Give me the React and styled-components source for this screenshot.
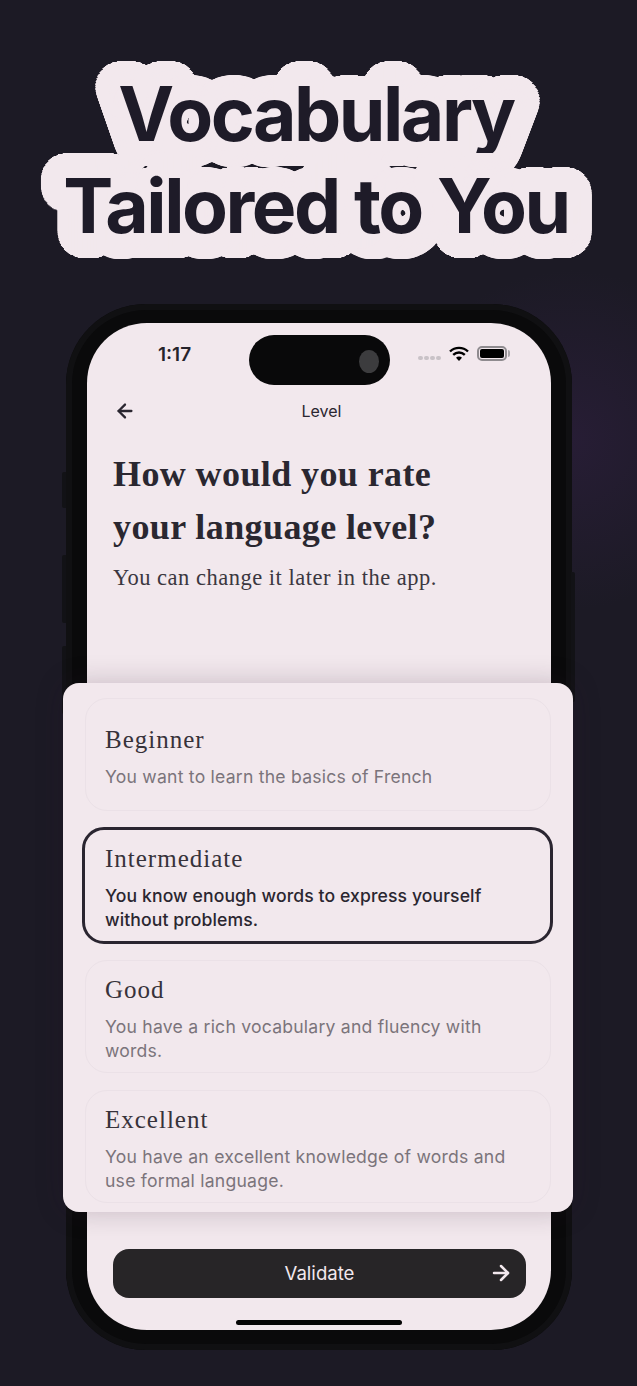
import React from "react";
import styled, { createGlobalStyle } from "styled-components";
import { ArrowLeft, ArrowRight } from "lucide-react";

// ring of hard shadows, gives the blobby sticker outline round the headline
const ring = (radius, steps, colour) => {
  const out = [];
  for (let i = 0; i < steps; i++) {
    const a = (i / steps) * Math.PI * 2;
    out.push(`${(Math.cos(a) * radius).toFixed(1)}px ${(Math.sin(a) * radius).toFixed(1)}px 0.6px ${colour}`);
  }
  return out.join(",");
};

const levels = [
  { name: "Beginner", text: "You want to learn the basics of French" },
  { name: "Intermediate", text: "You know enough words to express yourself without problems.", selected: true },
  { name: "Good", text: "You have a rich vocabulary and fluency with words." },
  { name: "Excellent", text: "You have an excellent knowledge of words and use formal language." },
];

const GlobalStyle = createGlobalStyle`
  html, body { margin: 0; padding: 0; background: #1c1a25; }
  * { box-sizing: border-box; }
`;

const Page = styled.div`
  width: 637px; height: 1386px; overflow: hidden; padding-top: 68px;
  background: radial-gradient(circle at 570px 440px, #271d35 0, #1c1a25 170px);
  font-family: Inter, "Liberation Sans", sans-serif;
`;
const Headline = styled.h1`
  margin: 0; height: 236px; padding-right: 5px; text-align: center; color: #1e1b28;
  font-size: 75px; line-height: 92px; font-weight: 700; letter-spacing: -2.5px;
  text-shadow: ${ring(25, 96, "#f2e8ed")};
`;
const Line = styled.div``;
const Phone = styled.div`
  position: relative; width: 506px; height: 1046px; margin-left: 66px;
  padding: 19px 21px 20px; border-radius: 80px; background: #0a0a0b;
  box-shadow: inset 0 0 0 6px #101012;
`;
const SideButton = styled.div`
  position: absolute; top: ${(p) => p.$top}px; width: 4px; height: ${(p) => p.$height}px;
  ${(p) => (p.$right ? "right: -3px; border-radius: 0 2px 2px 0;" : "left: -4px; border-radius: 2px 0 0 2px;")}
  background: #121216;
`;
const Screen = styled.div`
  position: relative; display: flex; flex-direction: column; height: 100%;
  border-radius: 60px; background: #f2e8ed; overflow: hidden; color: #2a2630;
`;
const Island = styled.div`
  position: absolute; left: 162px; top: 12px; width: 141px; height: 50px;
  border-radius: 25px; background: #09090a;
`;
const Lens = styled.div`
  position: absolute; right: 11px; top: 15px; width: 20px; height: 23px;
  border-radius: 50%; background: #3c3c3e;
`;
const StatusBar = styled.div`
  display: flex; align-items: center; justify-content: space-between;
  height: 63px; padding: 0 44px 0 71px;
`;
const Time = styled.span`font-size: 19px; font-weight: 600; color: #26232b; margin-top: -1px;`;
const StatusIcons = styled.div`display: flex; align-items: center; gap: 8px; margin-top: -2px;`;
const Dots = styled.div`display: flex; gap: 1px; margin-top: 9px;`;
const Dot = styled.i`display: block; width: 5px; height: 4px; border-radius: 2px; background: #c9c2c7;`;
const Battery = styled.div`
  position: relative; width: 30px; height: 15px; padding: 1px;
  border: 2px solid #8f8b8f; border-radius: 5px;
  &:after { content: ""; position: absolute; right: -5px; top: 2px; width: 2px; height: 7px; border-radius: 0 2px 2px 0; background: #a9a5a9; }
`;
const BatteryFill = styled.div`height: 100%; border-radius: 2px; background: #000;`;
const NavBar = styled.div`
  display: flex; align-items: center; position: relative; height: 50px; padding: 0 26px 0 27px;
  margin-bottom: 12px; color: #2a2630;
`;
const NavTitle = styled.div`flex: 1; text-align: center; font-size: 16px; margin-left: 6px; margin-right: 24px;`;
const Intro = styled.div`padding: 0 26px;`;
const Title = styled.h2`
  margin: 0; font-family: "Liberation Serif", serif; font-weight: 700; font-size: 36px; line-height: 53px;
  letter-spacing: 0.4px; color: #2a2730;
`;
const Sub = styled.p`
  margin: 10px 0 0; font-family: "Liberation Serif", serif; font-size: 22.5px; line-height: 28px;
  letter-spacing: 0.5px; color: #3b3740;
`;
const Footer = styled.div`
  margin-top: auto; padding: 0 25px 32px 26px;
`;
const ValidateButton = styled.button`
  position: relative; display: flex; align-items: center; justify-content: center; width: 413px; height: 49px;
  padding: 0 0 2px; border: 0; border-radius: 16px; background: #272527; color: #f2e8ed;
  font-family: Inter, "Liberation Sans", sans-serif; font-size: 18.6px;
  svg { position: absolute; right: 13px; top: 12px; }
`;
const HomeBar = styled.div`
  position: absolute; left: 149px; bottom: 5px; width: 166px; height: 5px; border-radius: 3px; background: #050505;
`;
const Sheet = styled.div`
  position: absolute; left: -3px; top: 379px; width: 510px; height: 529px; padding: 15px 22px 0;
  display: flex; flex-direction: column; gap: 16px;
  border-radius: 16px; background: #f2e8ed; box-shadow: 0 0 28px rgba(40, 20, 40, 0.22);
`;
const Card = styled.div`
  display: flex; flex-direction: column; justify-content: center; flex: none;
  height: ${(p) => (p.$selected ? "117px" : "113px")};
  margin: ${(p) => (p.$selected ? "0 -2px 0 -3px" : "0")};
  padding: 8px 20px 0 ${(p) => (p.$selected ? "20px" : "19px")};
  border: ${(p) => (p.$selected ? "3px solid #2a2530" : "1px solid #ebe1e7")};
  border-radius: 22px;
  &:last-child { margin-top: 1px; }
`;
const CardTitle = styled.div`
  font-family: "Liberation Serif", serif; font-size: 25px; line-height: 24px; letter-spacing: 1px; color: #37323a;
`;
const CardText = styled.div`
  margin-top: 13px; font-size: 17.6px; line-height: 24px;
  letter-spacing: ${(p) => (p.$selected ? "0.1px" : "0.22px")};
  color: ${(p) => (p.$selected ? "#2a2630" : "#7b747b")};
  font-weight: ${(p) => (p.$selected ? 500 : 400)};
`;

export default function App() {
  return (
    <Page>
      <GlobalStyle />
      <Headline>
        <Line>Vocabulary</Line>
        <Line>Tailored to You</Line>
      </Headline>
      <Phone>
        <SideButton $top={168} $height={36} />
        <SideButton $top={251} $height={68} />
        <SideButton $top={342} $height={68} />
        <SideButton $right $top={268} $height={130} />
        <Screen>
          <Island><Lens /></Island>
          <StatusBar>
            <Time>1:17</Time>
            <StatusIcons>
              <Dots><Dot /><Dot /><Dot /><Dot /></Dots>
              <svg width="20" height="16" viewBox="0 0 20 16">
                <path d="M1 5.5a13 13 0 0 1 18 0" fill="none" stroke="#000" strokeWidth="2.4" />
                <path d="M4.2 8.8a8.5 8.5 0 0 1 11.6 0" fill="none" stroke="#000" strokeWidth="2.4" />
                <path d="M7 11.8a4.2 4.2 0 0 1 6 0L10 15z" fill="#000" />
              </svg>
              <Battery><BatteryFill /></Battery>
            </StatusIcons>
          </StatusBar>
          <NavBar>
            <ArrowLeft size={22} strokeWidth={2.5} />
            <NavTitle>Level</NavTitle>
          </NavBar>
          <Intro>
            <Title>How would you rate<br />your language level?</Title>
            <Sub>You can change it later in the app.</Sub>
          </Intro>
          <Footer>
            <ValidateButton>Validate<ArrowRight size={24} strokeWidth={2.5} /></ValidateButton>
          </Footer>
          <HomeBar />
        </Screen>
        <Sheet>
          {levels.map((level) => (
            <Card key={level.name} $selected={level.selected}>
              <CardTitle>{level.name}</CardTitle>
              <CardText $selected={level.selected}>{level.text}</CardText>
            </Card>
          ))}
        </Sheet>
      </Phone>
    </Page>
  );
}
